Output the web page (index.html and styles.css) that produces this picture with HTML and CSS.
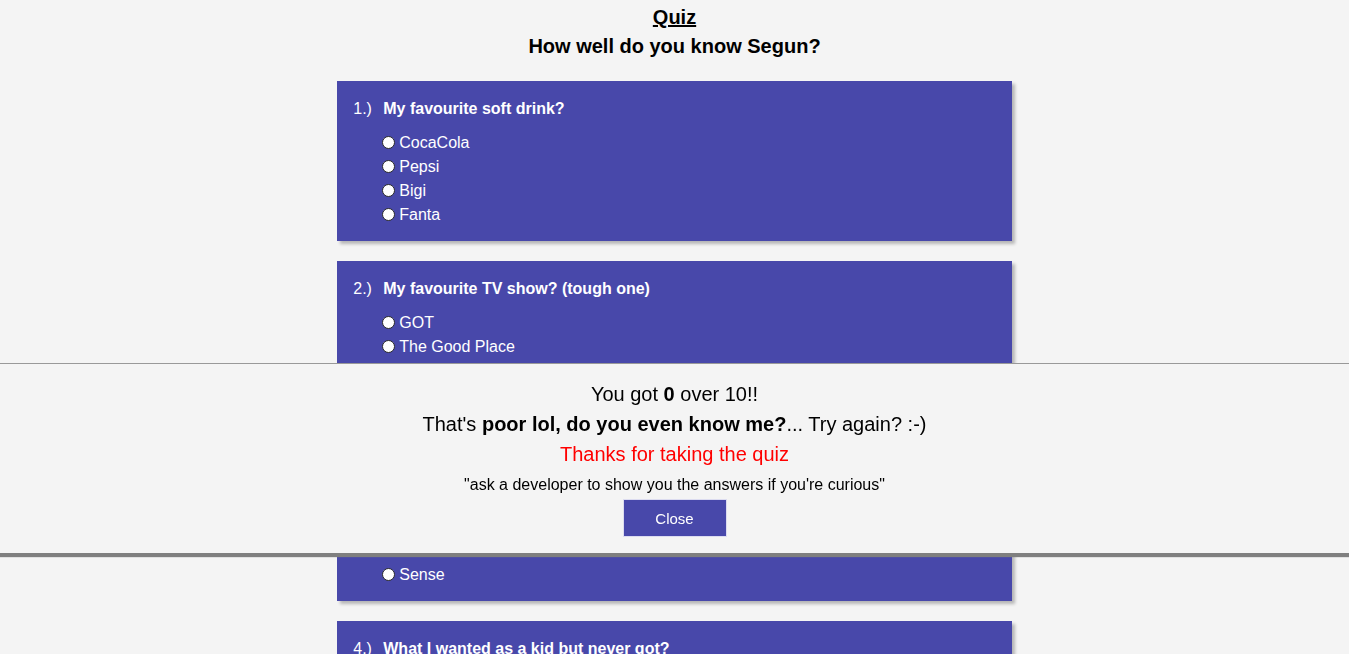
FILE: index.html
```html
<!DOCTYPE html>
<html>
<head>
<meta charset="utf-8">
<title>Quiz</title>
<link rel="stylesheet" href="styles.css">
</head>
<body>
<header class="head">
  <h1 class="title">Quiz</h1>
  <h2 class="subtitle">How well do you know Segun?</h2>
</header>
<main class="quiz">
  <section class="card">
    <div class="question"><span class="num">1.)</span><span class="qtext">My favourite soft drink?</span></div>
    <ul class="options">
      <li><span class="radio"></span>CocaCola</li>
      <li><span class="radio"></span>Pepsi</li>
      <li><span class="radio"></span>Bigi</li>
      <li><span class="radio"></span>Fanta</li>
    </ul>
  </section>
  <section class="card">
    <div class="question"><span class="num">2.)</span><span class="qtext">My favourite TV show? (tough one)</span></div>
    <ul class="options">
      <li><span class="radio"></span>GOT</li>
      <li><span class="radio"></span>The Good Place</li>
      <li><span class="radio"></span>Friends</li>
      <li><span class="radio"></span>Breaking Bad</li>
    </ul>
  </section>
  <section class="card">
    <div class="question"><span class="num">3.)</span><span class="qtext">What I value most in people?</span></div>
    <ul class="options">
      <li><span class="radio"></span>Loyalty</li>
      <li><span class="radio"></span>Honesty</li>
      <li><span class="radio"></span>Humour</li>
      <li><span class="radio"></span>Sense</li>
    </ul>
  </section>
  <section class="card">
    <div class="question"><span class="num">4.)</span><span class="qtext">What I wanted as a kid but never got?</span></div>
    <ul class="options">
      <li><span class="radio"></span>A bicycle</li>
      <li><span class="radio"></span>A dog</li>
      <li><span class="radio"></span>A video game</li>
      <li><span class="radio"></span>A brother</li>
    </ul>
  </section>
</main>
<div class="result">
  <p class="line">You got <b>0</b> over 10!!</p>
  <p class="line">That's <b>poor lol, do you even know me?</b>... Try again? :-)</p>
  <p class="line thanks">Thanks for taking the quiz</p>
  <p class="quote">"ask a developer to show you the answers if you're curious"</p>
  <button class="close">Close</button>
</div>
</body>
</html>
```

FILE: styles.css
```css
html, body {
  margin: 0;
  padding: 0;
}
body {
  background: #f4f4f4;
  font-family: "Liberation Sans", Arial, sans-serif;
  color: #000;
  overflow: hidden;
}
.head {
  text-align: center;
  padding-top: 6px;
  height: 75px;
  box-sizing: border-box;
}
.title {
  margin: 0;
  font-size: 20px;
  line-height: 23px;
  font-weight: bold;
  text-decoration: underline;
}
.subtitle {
  margin: 6px 0 0;
  font-size: 20px;
  line-height: 23px;
  font-weight: bold;
}
.quiz {
  display: flex;
  flex-direction: column;
  align-items: center;
  gap: 20px;
  padding-top: 6px;
}
.card {
  width: 50%;
  height: 160px;
  box-sizing: border-box;
  background: #4848aa;
  color: #fff;
  padding: 19px 16px 14px;
  box-shadow: 3px 3px 3px rgba(0, 0, 0, 0.25);
}
.question {
  display: flex;
  font-size: 16px;
  line-height: 18px;
}
.num {
  width: 30px;
}
.qtext {
  font-weight: bold;
}
.options {
  list-style: none;
  margin: 13px 0 0;
  padding: 0 0 0 29px;
}
.options li {
  display: flex;
  align-items: center;
  font-size: 16px;
  line-height: 24px;
}
.radio {
  width: 11px;
  height: 11px;
  border-radius: 50%;
  background: #fff;
  border: 1px solid #2a2a2a;
  margin-right: 4px;
  margin-top: -2px;
}
.result {
  position: fixed;
  left: 0;
  right: 0;
  top: 363px;
  background: #f4f4f4;
  border-top: 1px solid #999;
  box-shadow: 0 4px 1px #7f7f7f;
  text-align: center;
  padding: 15px 0 16px;
}
.line {
  margin: 0;
  font-size: 20px;
  line-height: 30px;
}
.thanks {
  color: #ff0000;
}
.quote {
  margin: 0;
  padding-top: 2px;
  font-size: 16px;
  line-height: 28px;
}
.close {
  display: block;
  box-sizing: border-box;
  margin: 0 auto;
  width: 104px;
  height: 38px;
  background: #4848aa;
  color: #fff;
  border: 1px solid #dcdcf0;
  font-family: "Liberation Sans", Arial, sans-serif;
  font-size: 15px;
  cursor: pointer;
}
```
